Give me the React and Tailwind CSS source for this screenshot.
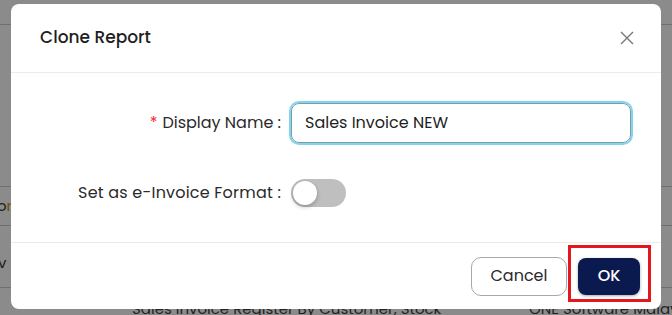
import React from "react";

export default function App() {
  const font = { fontFamily: "Poppins, Inter, 'Noto Sans', sans-serif" };
  return (
    <div
      className="relative w-[672px] h-[315px] overflow-hidden bg-[#8b8b8b]"
      style={font}
    >
      {/* dimmed page behind */}
      <div className="flex flex-col text-[15px] text-[#1a1a1a]">
        <div className="h-[25px] border-b border-[#6f6f6f]"></div>
        <div className="h-[162px] border-b border-[#6f6f6f]"></div>
        <div className="h-[39px] border-b border-[#6f6f6f] flex items-center">
          <span className="ml-[-3px] text-[#1c1c1c]">o<span className="text-[#7a4a00]">r</span></span>
        </div>
        <div className="h-[62px] border-b border-[#6f6f6f] flex items-center pt-[14px]">
          <span className="ml-[-2px]">v</span>
        </div>
        <div className="flex pl-[132px] pt-[10px] text-[15px] text-[#222]">
          <span className="w-[397px] shrink-0 whitespace-nowrap">Sales Invoice Register By Customer, Stock</span>
          <span className="shrink-0 whitespace-nowrap">ONE Software Malaysia</span>
        </div>
      </div>

      {/* modal */}
      <div className="absolute left-[11px] top-[4px] w-[650px] h-[305px] bg-white rounded-[8px] flex flex-col">
        <div className="h-[69px] flex items-center justify-between pl-[29px] pr-[26px] border-b border-[#ebebeb]">
          <span className="text-[17px] font-medium text-[#1f1f1f]">Clone Report</span>
          <svg width="16" height="16" viewBox="0 0 16 16" className="text-[#777]">
            <path d="M2 2 L14 14 M14 2 L2 14" stroke="currentColor" strokeWidth="1.4" />
          </svg>
        </div>
        <div className="flex-1 flex flex-col pt-[30px] pr-[30px] gap-[36px] border-b border-[#ebebeb]">
          <div className="flex items-center">
            <div className="w-[280px] shrink-0 pr-[10px] text-right text-[16px] text-[#2a2a2a] whitespace-nowrap">
              <span className="text-[#f5222d] mr-[5px]">*</span>Display Name :
            </div>
            <div className="w-[340px] shrink-0 h-[40px] rounded-[8px] border border-[#7f9aa4] shadow-[0_0_0_2px_#7fd6f2] flex items-center px-[13px] text-[16px] text-[#1f1f1f]">
              Sales Invoice NEW
            </div>
          </div>
          <div className="flex items-center">
            <div className="w-[280px] shrink-0 pr-[10px] text-right text-[16px] text-[#2a2a2a] whitespace-nowrap tracking-[0.2px]">
              Set as e-Invoice Format :
            </div>
            <div className="w-[55px] h-[28px] rounded-full bg-[#bfbfbf] flex items-center px-[2px]">
              <div className="w-[24px] h-[24px] rounded-full bg-white shadow-[0_2px_4px_rgba(0,0,0,0.25)]"></div>
            </div>
          </div>
        </div>
        <div className="h-[66px] flex items-center justify-end pr-[21px] gap-[11px]">
          <button className="w-[96px] h-[39px] rounded-[10px] border border-[#a8a8a8] bg-white text-[16px] text-[#2a2a2a]">
            Cancel
          </button>
          <button className="w-[62px] h-[37px] rounded-[8px] bg-[#0b1a4e] text-white text-[16px] font-medium shadow-[0_1px_3px_rgba(0,0,0,0.35)]">
            OK
          </button>
        </div>
      </div>

      {/* red highlight box */}
      <div className="absolute left-[568px] top-[245px] w-[83px] h-[57px] border-[3px] border-[#e4161e]"></div>
    </div>
  );
}
